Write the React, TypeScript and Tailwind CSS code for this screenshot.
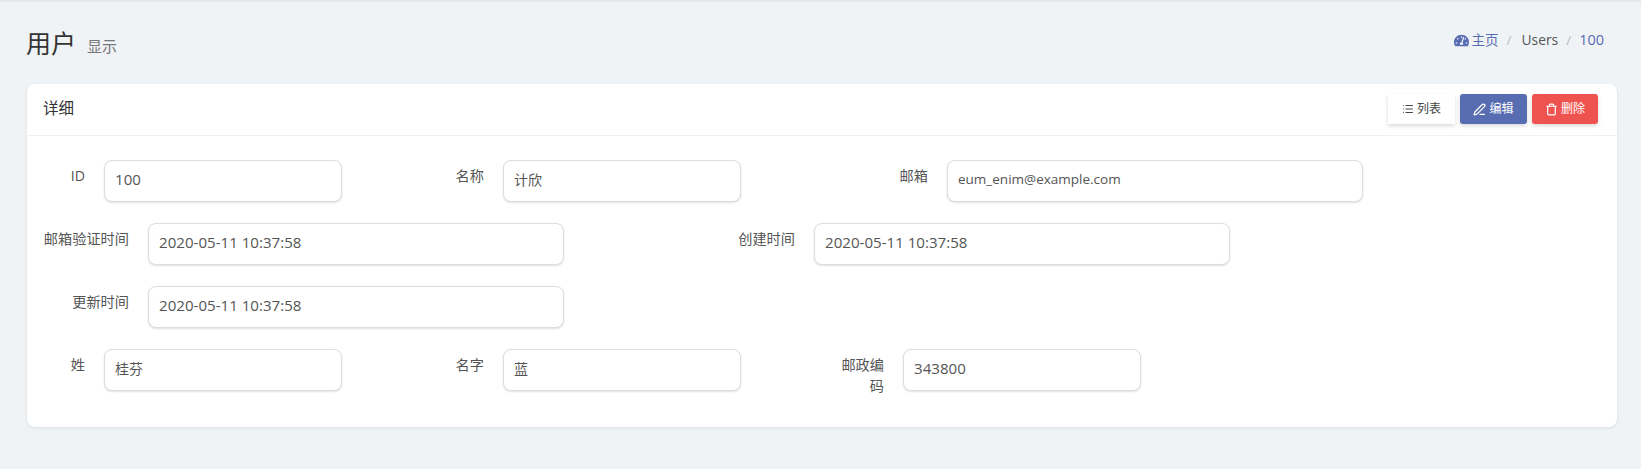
import React from "react";
import { FaTachometerAlt } from "react-icons/fa";
import { List, PenLine, Trash } from "lucide-react";

const font = { fontFamily: '"Open Sans","Noto Sans CJK SC",sans-serif' };

function Field({ label, value, labelW, inputW, left = 0, cls = "text-[15.1px]" }: { label: string; value: string; labelW: number; inputW: number; left?: number; cls?: string }) {
  return (
    <div className="flex" style={{ marginLeft: left }}>
      <div className="text-right text-[14.2px] leading-[21px] text-[#555] pt-[5px] pr-[19px] box-content" style={{ width: labelW }}>{label}</div>
      <div className={"h-[42px] rounded-[8px] border border-[#ddd] shadow-[0_1px_2px_rgba(0,0,0,0.12)] bg-white pl-[10px] pb-[3px] flex items-center text-[#555] " + cls} style={{ width: inputW }}>{value}</div>
    </div>
  );
}

function Btn({ children, cls }: { children: React.ReactNode; cls: string }) {
  return <div className={"h-[30px] flex items-center justify-center gap-[3px] text-[12px] shadow-[0_2px_4px_rgba(0,0,0,0.15)] " + cls}>{children}</div>;
}

export default function App() {
  return (
    <div style={font} className="min-h-[469px] bg-[#f0f3f6] shadow-[inset_0_3px_3px_-2px_rgba(0,0,0,0.08)] pl-[27px] pr-[24px] pt-[25px]">
      <div className="flex justify-between h-[59px]">
        <div className="flex items-baseline pt-[1px]">
          <span className="text-[25px] leading-[34px] text-[#333] ml-[-1px]">用户</span>
          <span className="ml-[11px] text-[15px] text-[#777] -translate-y-px">显示</span>
        </div>
        <div className="flex items-start text-[13.5px] leading-[20px] pt-[5px] pr-[13px] text-[#555]">
          <FaTachometerAlt className="text-[#586cb1] text-[15px] mt-[3px] mr-[3px]" />
          <span className="text-[#586cb1]">主页</span>
          <span className="text-[#bbb] pl-[8px] pr-[10px]">/</span>
          <span className="text-[13.8px]">Users</span>
          <span className="text-[#bbb] px-[8px]">/</span>
          <span className="text-[#586cb1] text-[14.5px]">100</span>
        </div>
      </div>
      <div className="bg-white rounded-[8px] shadow-[0_1px_3px_rgba(0,0,0,0.1)] h-[343px]">
        <div className="h-[52px] border-b border-[#f1f1f1] flex items-center justify-between pl-[16px] pr-[19px]">
          <span className="text-[15.5px] text-[#333] mt-[-2px]">详细</span>
          <div className="flex gap-[5px] mt-[-1px]">
            <Btn cls="w-[67px] bg-white text-[#444]"><List size={12} strokeWidth={2} />列表</Btn>
            <Btn cls="w-[67px] bg-[#586cb1] text-white rounded-[3px]"><PenLine size={13} strokeWidth={2.25} />编辑</Btn>
            <Btn cls="w-[66px] bg-[#ef5350] text-white rounded-[3px]"><Trash size={13} strokeWidth={2.25} />删除</Btn>
          </div>
        </div>
        <div className="pt-[24px] pl-[15px] flex flex-col gap-[21px]">
          <div className="flex">
            <Field label="ID" value="100" labelW={24} inputW={238} left={19} />
            <Field label="名称" value="计欣" labelW={48} inputW={238} left={94} cls="text-[14px]" />
            <Field label="邮箱" value="eum_enim@example.com" labelW={48} inputW={416} left={139} cls="text-[13.5px]" />
          </div>
          <div className="flex">
            <Field label="邮箱验证时间" value="2020-05-11 10:37:58" labelW={87} inputW={416} />
            <Field label="创建时间" value="2020-05-11 10:37:58" labelW={57} inputW={416} left={174} />
          </div>
          <div className="flex">
            <Field label="更新时间" value="2020-05-11 10:37:58" labelW={57} inputW={416} left={30} />
          </div>
          <div className="flex">
            <Field label="姓" value="桂芬" labelW={24} inputW={238} left={19} cls="text-[14px]" />
            <Field label="名字" value="蓝" labelW={48} inputW={238} left={94} cls="text-[14px]" />
            <Field label="邮政编码" value="343800" labelW={48} inputW={238} left={95} />
          </div>
        </div>
      </div>
    </div>
  );
}
